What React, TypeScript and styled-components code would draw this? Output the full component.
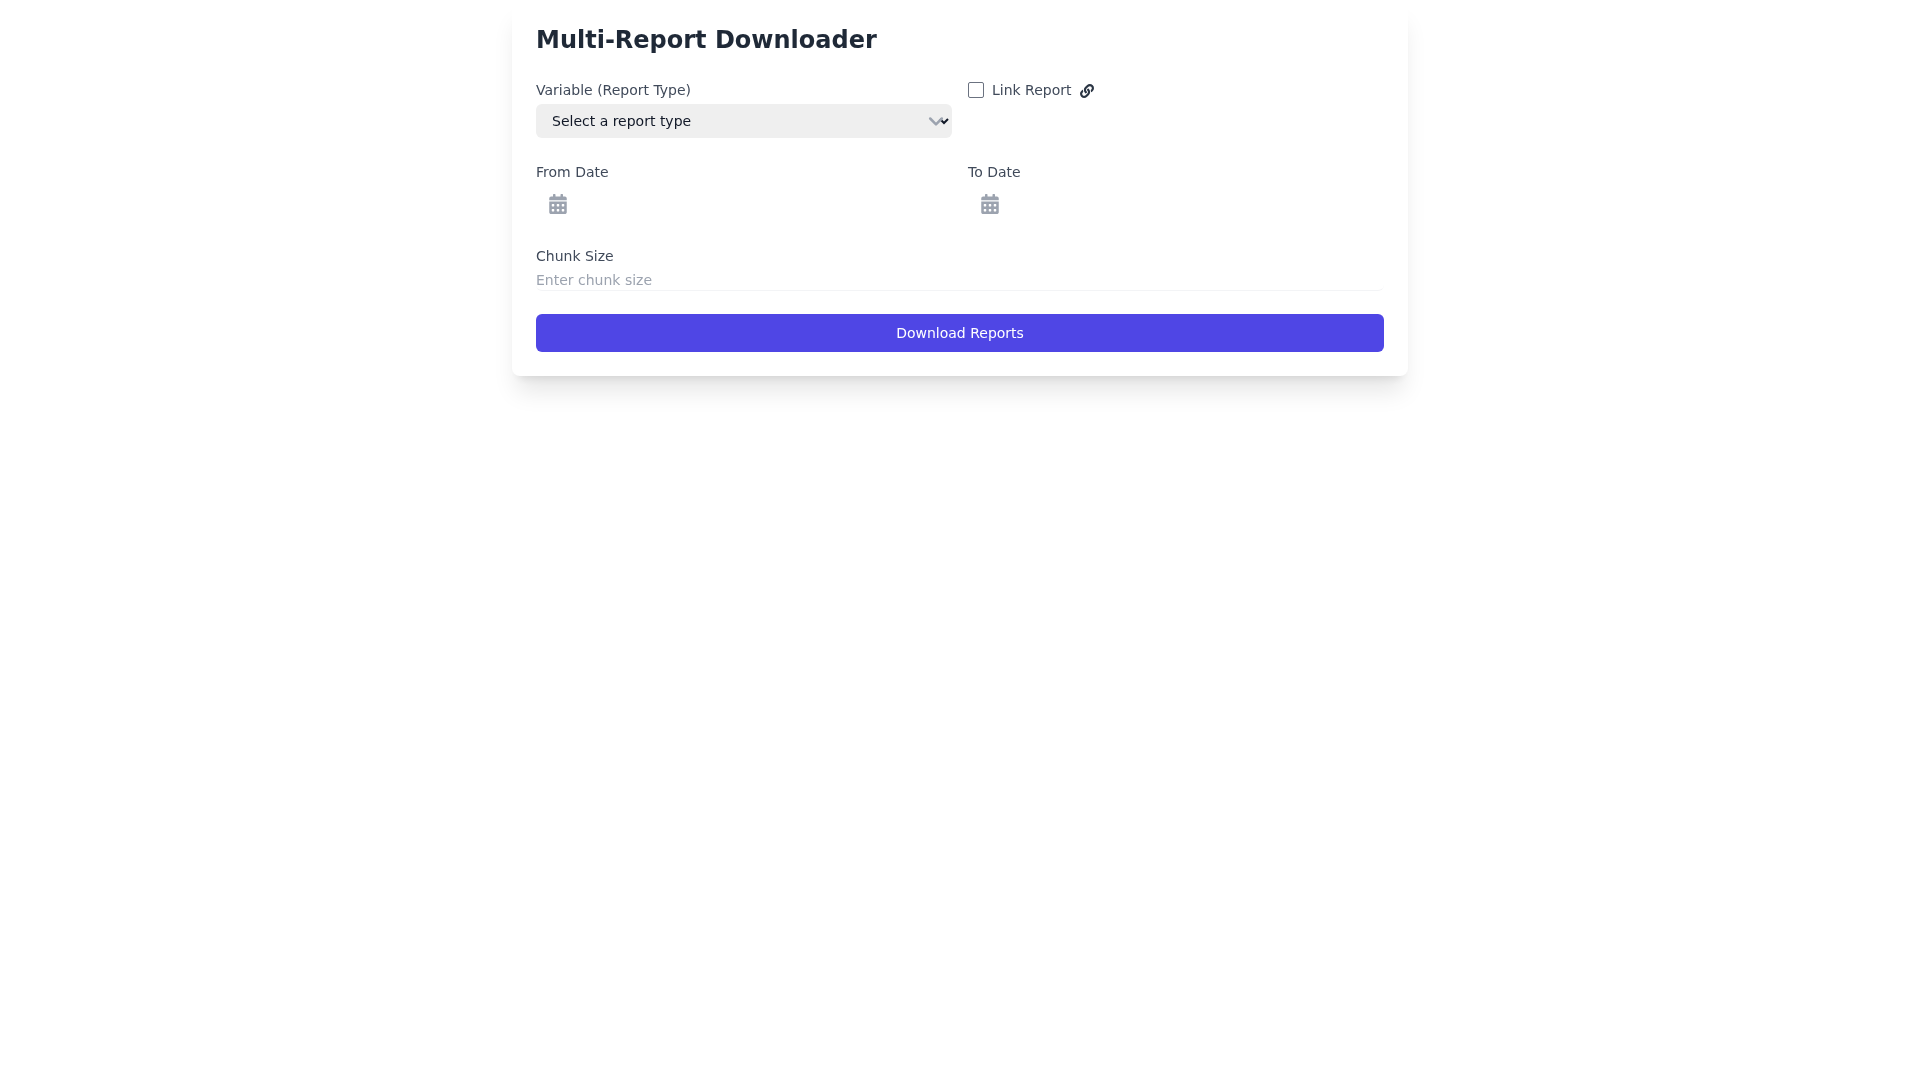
import React from "react";
import styled, { createGlobalStyle } from "styled-components";
import { FaLink, FaCalendarAlt } from "react-icons/fa";
import { HiOutlineChevronDown } from "react-icons/hi";

const GlobalStyle = createGlobalStyle`
  * {
    box-sizing: border-box;
  }
  body {
    margin: 0;
    background: #fff;
    font-family: "DejaVu Sans", sans-serif;
  }
`;

const Page = styled.div`
  min-height: 100vh;
`;

const Card = styled.form`
  width: 896px;
  margin: 0 auto;
  padding: 24px;
  display: flex;
  flex-direction: column;
  background: #fff;
  border-radius: 8px;
  box-shadow: 0 20px 25px -5px rgba(0, 0, 0, 0.1), 0 8px 10px -6px rgba(0, 0, 0, 0.1);
  will-change: transform;
`;

const Title = styled.h1`
  margin: 0 0 24px;
  font-size: 24px;
  line-height: 32px;
  font-weight: 700;
  color: #1f2937;
`;

const Grid = styled.div`
  display: grid;
  grid-template-columns: 1fr 1fr;
  gap: 24px 16px;
  margin-bottom: 24px;
`;

const Field = styled.div`
  display: flex;
  flex-direction: column;
`;

const Label = styled.label`
  display: block;
  margin-bottom: 4px;
  font-size: 14px;
  line-height: 20px;
  font-weight: 500;
  color: #404a5a;
`;

const SelectWrap = styled.div`
  position: relative;
  height: 34px;
`;

const Select = styled.select`
  width: 100%;
  height: 34px;
  padding: 0 12px;
  border: 0;
  border-radius: 6px;
  background: #efefef;
  color: #111827;
  font-family: inherit;
  font-size: 14px;
  outline: none;
`;

const SelectIcon = styled(HiOutlineChevronDown)`
  position: absolute;
  top: 7px;
  right: 6px;
  width: 20px;
  height: 20px;
  color: #9ca3af;
  pointer-events: none;

  path {
    stroke-width: 3;
  }
`;

const CheckRow = styled.div`
  display: flex;
  align-items: center;
  height: 20px;
`;

const Checkbox = styled.input.attrs({ type: "checkbox" })`
  width: 16px;
  height: 16px;
  margin: 0 8px 0 0;
  appearance: none;
  background: #fff;
  border: 1px solid #6b7280;
  border-radius: 2px;
`;

const CheckLabel = styled.label`
  font-size: 14px;
  line-height: 20px;
  font-weight: 500;
  color: #404a5a;
`;

const LinkIcon = styled(FaLink)`
  width: 14px;
  height: 14px;
  margin: 2px 0 0 8px;
  color: #2b3544;
`;

const DateBox = styled.div`
  display: flex;
  align-items: center;
  height: 36px;
  padding-left: 12px;
`;

const DateIcon = styled(FaCalendarAlt)`
  width: 20px;
  height: 20px;
  color: #9ca3af;
`;

const ChunkField = styled(Field)`
  margin-bottom: 23px;
`;

const ChunkInput = styled.input`
  width: 100%;
  height: 21px;
  padding: 0;
  border: 0;
  border-bottom: 1px solid #f3f4f6;
  border-radius: 6px;
  background: #fff;
  font-family: inherit;
  font-size: 14px;
  outline: none;

  &::placeholder {
    color: #9ca3af;
    opacity: 1;
  }
`;

const SubmitButton = styled.button`
  width: 100%;
  height: 38px;
  border: 0;
  border-radius: 6px;
  background: #4f46e5;
  color: #fff;
  font-family: inherit;
  font-size: 14px;
  font-weight: 500;
`;

const App: React.FC = () => {
  return (
    <Page>
      <GlobalStyle />
      <Card>
        <Title>Multi-Report Downloader</Title>
        <Grid>
          <Field>
            <Label>Variable (Report Type)</Label>
            <SelectWrap>
              <Select defaultValue="">
                <option value="">Select a report type</option>
              </Select>
              <SelectIcon />
            </SelectWrap>
          </Field>
          <Field>
            <CheckRow>
              <Checkbox id="link-report" />
              <CheckLabel htmlFor="link-report">Link Report</CheckLabel>
              <LinkIcon />
            </CheckRow>
          </Field>
          <Field>
            <Label>From Date</Label>
            <DateBox>
              <DateIcon />
            </DateBox>
          </Field>
          <Field>
            <Label>To Date</Label>
            <DateBox>
              <DateIcon />
            </DateBox>
          </Field>
        </Grid>
        <ChunkField>
          <Label>Chunk Size</Label>
          <ChunkInput placeholder="Enter chunk size" />
        </ChunkField>
        <SubmitButton type="button">Download Reports</SubmitButton>
      </Card>
    </Page>
  );
};

export default App;
